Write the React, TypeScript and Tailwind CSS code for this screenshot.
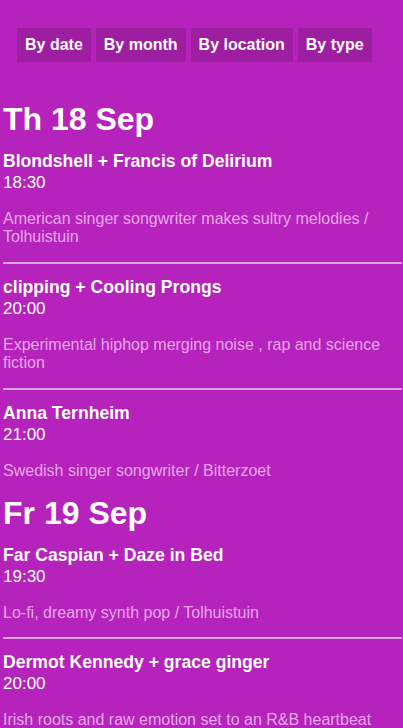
import { Fragment } from "react";

type Gig = {
  title: string;
  time: string;
  desc: string;
};

type Day = {
  label: string;
  gigs: Gig[];
};

const FILTERS: string[] = ["By date", "By month", "By location", "By type"];

const DAYS: Day[] = [
  {
    label: "Th 18 Sep",
    gigs: [
      {
        title: "Blondshell + Francis of Delirium",
        time: "18:30",
        desc: "American singer songwriter makes sultry melodies / Tolhuistuin",
      },
      {
        title: "clipping + Cooling Prongs",
        time: "20:00",
        desc: "Experimental hiphop merging noise , rap and science fiction",
      },
      {
        title: "Anna Ternheim",
        time: "21:00",
        desc: "Swedish singer songwriter / Bitterzoet",
      },
    ],
  },
  {
    label: "Fr 19 Sep",
    gigs: [
      {
        title: "Far Caspian + Daze in Bed",
        time: "19:30",
        desc: "Lo-fi, dreamy synth pop / Tolhuistuin",
      },
      {
        title: "Dermot Kennedy + grace ginger",
        time: "20:00",
        desc: "Irish roots and raw emotion set to an R&B heartbeat",
      },
    ],
  },
];

function GigItem({ gig }: { gig: Gig }) {
  return (
    <div>
      <div className="text-[17.6px] font-bold leading-[21px] text-white">
        {gig.title}
      </div>
      <div className="text-[17px] leading-[21px] text-white">{gig.time}</div>
      <p className="mt-[17px] text-[16px] leading-[18.4px] text-[#e6a8e9]">
        {gig.desc}
      </p>
    </div>
  );
}

export default function App() {
  return (
    <div className="min-h-screen overflow-hidden bg-[#b622bc] pl-[3px] pr-[1px] pt-[28px] font-['Liberation_Sans',Arial,sans-serif]">
      <nav className="flex gap-[5px] pl-[14px]">
        {FILTERS.map((f) => (
          <button
            key={f}
            type="button"
            className="bg-[#9d1ea0] px-2 py-2 text-[16px] font-bold leading-[18px] text-white"
          >
            {f}
          </button>
        ))}
      </nav>

      <div className="mt-[39px]">
        {DAYS.map((day, di) => (
          <section key={day.label} className={di > 0 ? "mt-[15px]" : ""}>
            <h1 className="text-[32px] font-bold leading-[37px] text-white">
              {day.label}
            </h1>
            <div className="mt-[13px]">
              {day.gigs.map((g, i) => (
                <Fragment key={g.title}>
                  {i > 0 && (
                    <hr className="mt-[15px] mb-[13px] border-t-2 border-[#d9a3dc]" />
                  )}
                  <GigItem gig={g} />
                </Fragment>
              ))}
            </div>
          </section>
        ))}
      </div>
    </div>
  );
}
